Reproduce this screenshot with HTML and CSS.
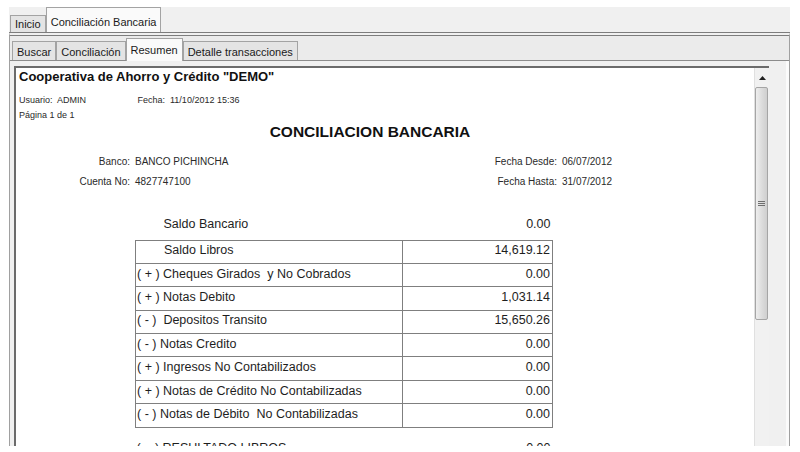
FILE: index.html
```html
<!DOCTYPE html>
<html lang="es">
<head>
    <meta charset="UTF-8" />
    <title>Conciliación Bancaria - Resumen</title>
    <link rel="stylesheet" href="styles.css">
</head>
<body>
    <div class="app">
        <div class="tabs-top">
            <div class="tab">Inicio</div>
            <div class="tab active">Conciliación Bancaria</div>
        </div>

        <div class="page">
            <div class="tabs-inner">
                <div class="tab">Buscar</div>
                <div class="tab">Conciliación</div>
                <div class="tab active">Resumen</div>
                <div class="tab">Detalle transacciones</div>
            </div>

            <div class="viewer-wrap">
                <div class="viewer">
                    <div class="report">
                        <div class="report-title">Cooperativa de Ahorro y Crédito "DEMO"</div>
                        <div class="meta">
                            <span class="meta-user">Usuario:&nbsp; ADMIN</span>
                            <span>Fecha:&nbsp; 11/10/2012 15:36</span>
                        </div>
                        <div class="meta">Página 1 de 1</div>

                        <h1>CONCILIACION BANCARIA</h1>

                        <div class="info">
                            <span class="lbl">Banco:</span>
                            <span>BANCO PICHINCHA</span>
                            <span class="lbl">Fecha Desde:</span>
                            <span>06/07/2012</span>
                            <span class="lbl">Cuenta No:</span>
                            <span>4827747100</span>
                            <span class="lbl">Fecha Hasta:</span>
                            <span>31/07/2012</span>
                        </div>

                        <table class="summary">
                            <colgroup>
                                <col class="c-desc">
                                <col class="c-val">
                            </colgroup>
                            <tr class="plain first">
                                <td class="indent">Saldo Bancario</td>
                                <td class="num">0.00</td>
                            </tr>
                            <tr>
                                <td class="indent">Saldo Libros</td>
                                <td class="num">14,619.12</td>
                            </tr>
                            <tr>
                                <td>( + ) Cheques Girados  y No Cobrados</td>
                                <td class="num">0.00</td>
                            </tr>
                            <tr>
                                <td>( + ) Notas Debito</td>
                                <td class="num">1,031.14</td>
                            </tr>
                            <tr>
                                <td>( - )  Depositos Transito</td>
                                <td class="num">15,650.26</td>
                            </tr>
                            <tr>
                                <td>( - ) Notas Credito</td>
                                <td class="num">0.00</td>
                            </tr>
                            <tr>
                                <td>( + ) Ingresos No Contabilizados</td>
                                <td class="num">0.00</td>
                            </tr>
                            <tr>
                                <td>( + ) Notas de Crédito No Contabilizadas</td>
                                <td class="num">0.00</td>
                            </tr>
                            <tr>
                                <td>( - ) Notas de Débito  No Contabilizadas</td>
                                <td class="num">0.00</td>
                            </tr>
                            <tr class="plain last">
                                <td>( = ) RESULTADO LIBROS</td>
                                <td class="num">0.00</td>
                            </tr>
                        </table>
                    </div>

                    <div class="vscroll">
                        <div class="sb-btn up">
                            <svg width="7" height="4" viewBox="0 0 7 4"><path d="M0 4 L3.5 0 L7 4 Z" fill="#1f1f1f"/></svg>
                        </div>
                        <div class="sb-thumb">
                            <svg width="7" height="5" viewBox="0 0 7 5"><path d="M0 0.5 H7 M0 2.5 H7 M0 4.5 H7" stroke="#6f6f6f" stroke-width="1"/></svg>
                        </div>
                        <div class="sb-track"></div>
                        <div class="sb-btn down">
                            <svg width="7" height="4" viewBox="0 0 7 4"><path d="M0 0 L3.5 4 L7 0 Z" fill="#1f1f1f"/></svg>
                        </div>
                    </div>
                </div>
            </div>
        </div>
    </div>
</body>
</html>
```

FILE: styles.css
```css
* {
    box-sizing: border-box;
    margin: 0;
    padding: 0;
}

body {
    background: #ffffff;
    font-family: "Liberation Sans", Arial, sans-serif;
    color: #1c1c1c;
}

.app {
    margin: 7px 0 0 9px;
    width: 781px;
    height: 439px;
    display: flex;
    flex-direction: column;
    background: #f0f0f0;
    overflow: hidden;
}

/* tabs */

.tab {
    font-size: 11px;
    line-height: 16px;
    padding: 0 4px;
    border: 1px solid #a3a3a3;
    border-bottom: none;
    background: #e4e4e4;
    color: #1a1a1a;
    white-space: nowrap;
}

.tab.active {
    background: #fafafa;
}

.tabs-top {
    display: flex;
    align-items: flex-end;
    height: 25px;
    padding-left: 1px;
}

.tabs-top .tab {
    height: 17px;
}

.tabs-top .tab.active {
    height: 25px;
    padding-top: 6px;
}

.page {
    flex: 1;
    display: flex;
    flex-direction: column;
    border-top: 4px double #7d7d7d;
    border-left: 1px solid #a0a0a0;
    border-right: 1px solid #a0a0a0;
}

.tabs-inner {
    display: flex;
    align-items: flex-end;
    height: 25px;
    padding-left: 2px;
    background: #ebebeb;
    border-bottom: 1px solid #8c8c8c;
}

.tabs-inner .tab {
    height: 19px;
    padding-top: 2px;
}

.tabs-inner .tab.active {
    height: 23px;
    padding-top: 3px;
    margin-bottom: -1px;
}

/* report viewer */

.viewer-wrap {
    flex: 1;
    display: flex;
    padding: 5px 17px 1px 4px;
    border-right: 3px solid #fbfbfb;
}

.viewer {
    flex: 1;
    display: flex;
    background: #ffffff;
    border-top: 2px solid #6b6b6b;
    border-left: 2px solid #6b6b6b;
    border-bottom: 1px solid #9a9a9a;
    overflow: hidden;
}

.report {
    flex: 1;
    overflow: hidden;
    padding: 1px 0 0 3px;
}

.report-title {
    font-size: 13px;
    font-weight: bold;
    line-height: 16px;
    color: #111;
}

.meta {
    font-size: 9px;
    line-height: 15px;
    color: #2a2a2a;
}

.report-title + .meta {
    margin-top: 8px;
}

.meta-user {
    display: inline-block;
    width: 116px;
}

h1 {
    width: 702px;
    font-size: 15.5px;
    line-height: 18px;
    text-align: center;
    color: #111;
}

.info {
    display: grid;
    grid-template-columns: 111px 350px 67px auto;
    column-gap: 5px;
    margin-top: 11px;
    font-size: 10px;
    line-height: 20px;
    color: #2a2a2a;
}

.info .lbl {
    text-align: right;
    white-space: nowrap;
}

/* summary table */

.summary {
    margin: 20px 0 0 116px;
    width: 417px;
    table-layout: fixed;
    border-collapse: collapse;
    font-size: 12.5px;
    color: #1e1e1e;
}

.c-desc {
    width: 267px;
}

.c-val {
    width: 150px;
}

.summary td {
    height: 23.4px;
    padding: 0 2px 3px 1px;
    border: 1px solid #7f7f7f;
    white-space: pre;
    vertical-align: middle;
    line-height: 16px;
}

.summary .plain td {
    border-left: none;
    border-right: none;
    height: 28px;
}

.summary .first td {
    border-top: none;
}

.summary .last td {
    border-bottom: none;
    padding-top: 12px;
}

.summary td.indent {
    padding-left: 28px;
}

.summary td.num {
    text-align: right;
}

/* scrollbar */

.vscroll {
    width: 15px;
    display: flex;
    flex-direction: column;
    background: #f1f1f1;
    border-left: 1px solid #e0e0e0;
}

.sb-btn {
    display: flex;
    align-items: center;
    justify-content: center;
}

.sb-btn.up {
    height: 19px;
}

.sb-btn.down {
    height: 14px;
}

.sb-thumb {
    height: 233px;
    margin-right: 1px;
    display: flex;
    align-items: center;
    justify-content: center;
    border: 1px solid #a5a5a5;
    border-radius: 2px;
    background: linear-gradient(to right, #eeeeee, #dadada 60%, #cfcfcf);
}

.sb-track {
    flex: 1;
}
```
